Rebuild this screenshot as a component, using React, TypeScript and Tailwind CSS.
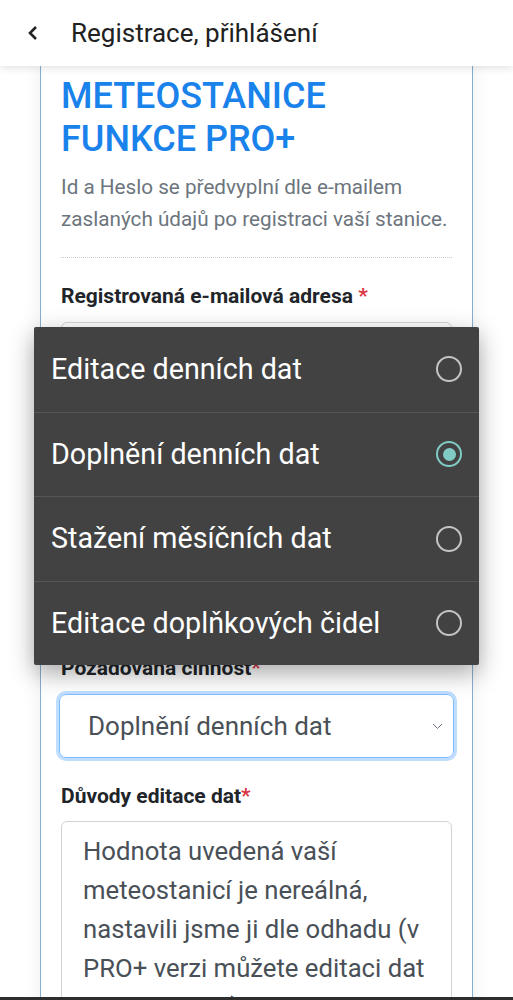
import React from "react";

const options = [
  { label: "Editace denních dat", selected: false },
  { label: "Doplnění denních dat", selected: true },
  { label: "Stažení měsíčních dat", selected: false },
  { label: "Editace doplňkových čidel", selected: false },
];

function Radio({ selected }: { selected: boolean }) {
  if (selected) {
    return (
      <span className="flex h-[26px] w-[26px] items-center justify-center rounded-full border-[2.5px] border-[#80cbc4]">
        <span className="h-[13px] w-[13px] rounded-full bg-[#80cbc4]" />
      </span>
    );
  }
  return <span className="h-[26px] w-[26px] rounded-full border-[2.5px] border-[#c4c4c4]" />;
}

function Label({ text, spaced, className }: { text: string; spaced?: boolean; className: string }) {
  return (
    <div className={`text-[21px] font-bold leading-[28px] text-[#212529] ${className}`}>
      {text}
      {spaced ? " " : ""}
      <span className="text-[#dc3545]">*</span>
    </div>
  );
}

export default function App() {
  return (
    <div className="relative min-h-[1000px] overflow-hidden bg-white" style={{ fontFamily: "Roboto, 'Noto Sans', sans-serif" }}>
      {/* top bar */}
      <div className="relative z-10 flex h-[66px] items-center bg-white shadow-[0_2px_8px_rgba(0,0,0,0.12)]">
        <svg className="ml-[27px]" width="12" height="16" viewBox="0 0 12 16" fill="none">
          <path d="M9 2 L3 8 L9 14" stroke="#222" strokeWidth="2.6" />
        </svg>
        <span className="ml-[32px] text-[26px] text-[#212121]">Registrace, přihlášení</span>
      </div>

      {/* card */}
      <div className="mx-[40px] border-x border-[#86aed2] bg-white px-5 pt-[9px] pb-10 shadow-[0_0_18px_rgba(0,0,0,0.07)]">
        <h1 className="text-[36px] font-medium leading-[43px] text-[#1a82eb]">
          METEOSTANICE
          <br />
          FUNKCE PRO+
        </h1>
        <p className="mt-[10px] text-[20.7px] leading-[32px] text-[#6c757d]">
          Id a Heslo se předvyplní dle e-mailem zaslaných údajů po registraci vaší stanice.
        </p>
        <div className="mt-[22px] border-t border-dotted border-[#c8c8c8]" />

        <Label text="Registrovaná e-mailová adresa" spaced className="mt-[24px]" />
        <div className="mt-[12px] h-[62px] rounded-md border border-[#ced4da]" />

        <Label text="Id stanice" className="mt-[24px]" />
        <div className="mt-[10px] h-[62px] rounded-md border border-[#ced4da]" />

        <Label text="Heslo" className="mt-[24px]" />
        <div className="mt-[10px] h-[62px] rounded-md border border-[#ced4da]" />

        <Label text="Požadovaná činnost" className="mt-[22px]" />
        <div className="-mx-[2px] mt-[12px] flex h-[64px] items-center justify-between rounded-[7px] border border-[#80bdff] pr-[10px] pl-[28px] shadow-[0_0_0_3px_rgba(0,123,255,0.25)]">
          <span className="text-[26px] text-[#495057]">Doplnění denních dat</span>
          <svg width="11" height="7" viewBox="0 0 11 7" fill="none">
            <path d="M1 1 L5.5 5.5 L10 1" stroke="#6c757d" strokeWidth="1" />
          </svg>
        </div>

        <Label text="Důvody editace dat" className="mt-[24px]" />
        <div className="mt-[11px] rounded-md border border-[#ced4da] px-[21px] pt-[10px] pb-4 text-[25.7px] leading-[39px] text-[#495057]">
          Hodnota uvedená vaší meteostanicí je nereálná, nastavili jsme ji dle odhadu (v PRO+ verzi můžete editaci dat provést sami).
        </div>
      </div>

      {/* dropdown overlay */}
      <div className="absolute top-[327px] left-[34px] z-20 w-[445px] rounded-[2px] bg-[#424242] shadow-[0_8px_24px_rgba(0,0,0,0.35)]">
        {options.map((o, i) => (
          <div
            key={o.label}
            className={`flex h-[84.5px] items-center justify-between pr-[17px] pl-[17px] ${i > 0 ? "border-t border-[#565656]" : ""}`}
          >
            <span className="text-[28.7px] text-white">{o.label}</span>
            <Radio selected={o.selected} />
          </div>
        ))}
      </div>

      {/* bottom system bar edge */}
      <div className="fixed right-0 bottom-0 left-0 z-30 h-[3px] bg-[#2e2e2e]" />
    </div>
  );
}
